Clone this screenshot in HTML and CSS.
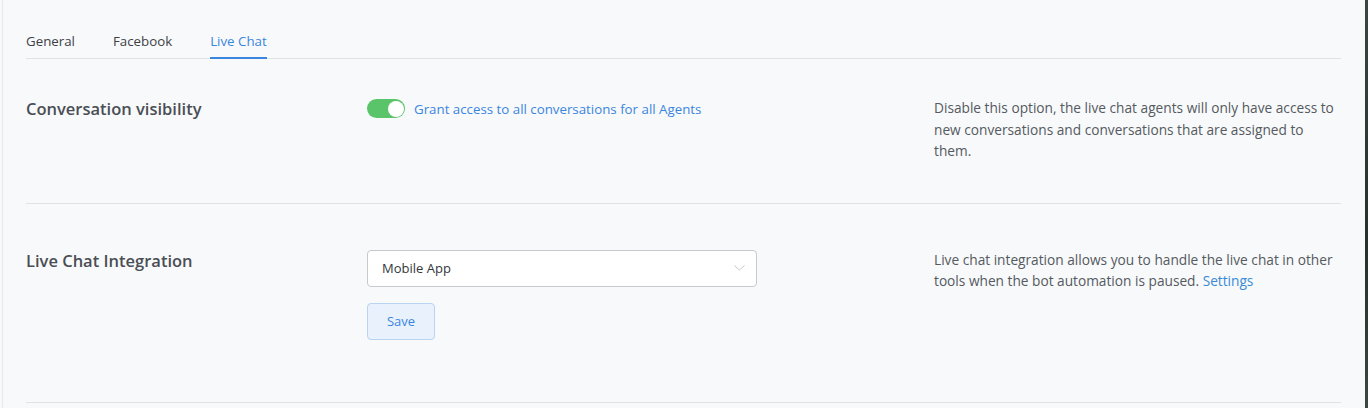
FILE: index.html
```html
<!DOCTYPE html>
<html lang="en">
<head>
    <meta charset="UTF-8">
    <meta name="viewport" content="width=device-width, initial-scale=1.0">
    <title>Settings - Live Chat</title>
    <link rel="stylesheet" href="styles.css">
</head>
<body>

    <div class="page">

        <!-- Tabs -->
        <div class="tabs">
            <div class="tab">General</div>
            <div class="tab">Facebook</div>
            <div class="tab active">Live Chat</div>
        </div>

        <!-- Conversation visibility -->
        <div class="row row-first">
            <div class="label">Conversation visibility</div>
            <div class="control">
                <label class="switch-line">
                    <span class="switch on"><span class="knob"></span></span>
                    <span class="switch-text">Grant access to all conversations for all Agents</span>
                </label>
            </div>
            <div class="help">Disable this option, the live chat agents will only have access to new conversations and conversations that are assigned to them.</div>
        </div>

        <!-- Live chat integration -->
        <div class="row row-second">
            <div class="label">Live Chat Integration</div>
            <div class="control">
                <div class="select">
                    <span>Mobile App</span>
                    <svg class="chevron" width="11" height="6" viewBox="0 0 11 6">
                        <path d="M0.5 0.5 L5.5 5 L10.5 0.5" fill="none" stroke="#c3c7cc" stroke-width="1"/>
                    </svg>
                </div>
                <button class="btn-save">Save</button>
            </div>
            <div class="help">Live chat integration allows you to handle the live chat in other tools when the bot automation is paused. <a href="#" class="link">Settings</a></div>
        </div>

    </div>
    <div class="edge"></div>

</body>
</html>
```

FILE: styles.css
```css
body {
    font-family: "Open Sans", Arial, sans-serif;
    margin: 0;
    padding: 0;
    display: flex;
    height: 408px;
    background-color: #f8f9fb;
    overflow: hidden;
}

.page {
    flex: 1;
    margin-left: 2px;
    border-left: 1px solid #e6e8eb;
    padding: 32px 24px 0 23px;
    background-color: #f8f9fb;
}

.edge {
    width: 3px;
    background: linear-gradient(#3a4640, #26302c 60%, #3b4743);
}

/* Tabs */
.tabs {
    display: flex;
    gap: 38px;
    border-bottom: 1px solid #dfe2e6;
}

.tab {
    font-size: 13.3px;
    line-height: 18px;
    color: #3d4146;
    padding-bottom: 7px;
    border-bottom: 2px solid transparent;
    margin-bottom: -1px;
    cursor: pointer;
}

.tab.active {
    color: #3a86de;
    border-bottom-color: #3a86de;
}

/* Rows */
.row {
    display: flex;
    align-items: flex-start;
    border-bottom: 1px solid #dfe2e6;
}

.row-first {
    padding: 39px 0 41px;
}

.row-second {
    padding: 46px 0 62px;
}

.label {
    width: 341px;
    flex-shrink: 0;
    font-size: 16.5px;
    line-height: 22px;
    font-weight: 600;
    color: #4a4e54;
}

.control {
    width: 567px;
    flex-shrink: 0;
}

.help {
    flex: 1;
    max-width: 402px;
    font-size: 13.7px;
    line-height: 21.5px;
    color: #555a60;
    margin-top: -1px;
}

.link {
    color: #3a8ad6;
    text-decoration: none;
}

/* Switch */
.switch-line {
    display: flex;
    align-items: center;
    gap: 9px;
    margin-top: 1px;
    cursor: pointer;
}

.switch {
    width: 38px;
    height: 19px;
    border-radius: 10px;
    background-color: #d3d6da;
    position: relative;
    flex-shrink: 0;
}

.switch.on {
    background-color: #5ac46a;
}

.knob {
    position: absolute;
    top: 1.5px;
    left: 1.5px;
    width: 16px;
    height: 16px;
    border-radius: 50%;
    background-color: #fff;
}

.switch.on .knob {
    left: 20.5px;
}

.switch-text {
    font-size: 13.3px;
    line-height: 18px;
    color: #3a86de;
}

/* Select */
.select {
    width: 390px;
    height: 37px;
    box-sizing: border-box;
    border: 1px solid #c6cacf;
    border-radius: 4px;
    background-color: #fff;
    display: flex;
    align-items: center;
    justify-content: space-between;
    padding: 0 11px 0 14px;
    font-size: 13px;
    color: #33373b;
}

.chevron {
    display: block;
}

.btn-save {
    margin-top: 16px;
    width: 68px;
    height: 37px;
    font-family: "Open Sans", Arial, sans-serif;
    font-size: 13px;
    color: #3a86de;
    background-color: #e8f1fc;
    border: 1px solid #b9d3f2;
    border-radius: 4px;
    cursor: pointer;
}
```
